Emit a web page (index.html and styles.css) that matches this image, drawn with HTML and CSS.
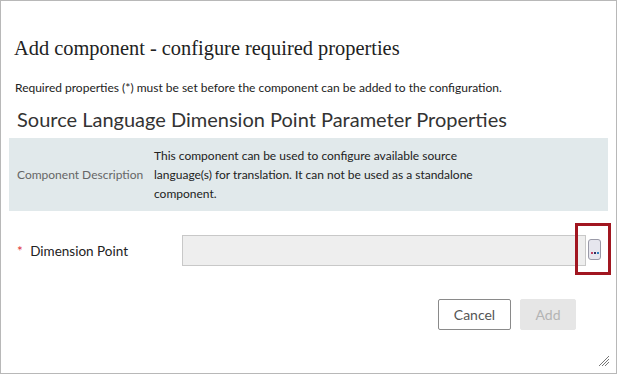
FILE: index.html
```html
<!DOCTYPE html>
<html lang="en">
  <head>
    <meta charset="UTF-8" />
    <meta name="viewport" content="width=device-width, initial-scale=1.0" />
    <title>Add component</title>
    <link rel="stylesheet" href="styles.css">
  </head>
  <body>
    <div class="dialog">
      <h1 class="dialog-title">Add component - configure required properties</h1>
      <p class="intro">Required properties (*) must be set before the component can be added to the configuration.</p>
      <h2 class="section-title">Source Language Dimension Point Parameter Properties</h2>

      <div class="description">
        <div class="description-label">Component Description</div>
        <div class="description-text">This component can be used to configure available source language(s) for translation. It can not be used as a standalone component.</div>
      </div>

      <div class="field-row">
        <label class="field-label" for="dimensionPoint"><span class="required">*</span> Dimension Point</label>
        <div class="field-control">
          <input type="text" id="dimensionPoint" class="field-input" disabled />
          <div class="picker-highlight">
            <button class="picker-button" type="button"><span class="dot d1"></span><span class="dot d2"></span><span class="dot d3"></span></button>
          </div>
        </div>
      </div>

      <div class="actions">
        <button class="btn btn-cancel" type="button">Cancel</button>
        <button class="btn btn-add" type="button" disabled>Add</button>
      </div>

      <svg class="grip" width="12" height="12" viewBox="0 0 12 12">
        <line x1="11" y1="1" x2="1" y2="11" stroke="#777" stroke-width="1" />
        <line x1="11" y1="4" x2="4" y2="11" stroke="#777" stroke-width="1" />
        <line x1="11" y1="7" x2="7" y2="11" stroke="#777" stroke-width="1" />
      </svg>
    </div>
  </body>
</html>
```

FILE: styles.css
```css
body {
  margin: 0;
  background: #ffffff;
  font-family: "Lato", "Open Sans", sans-serif;
  color: #222222;
}
.dialog {
  position: relative;
  box-sizing: border-box;
  width: 617px;
  height: 374px;
  border: 1px solid #b8b8b8;
  padding: 0 8px 0 8px;
}
.dialog-title {
  margin: 34px 0 0 5px;
  font-family: "Liberation Serif", "DejaVu Serif", serif;
  font-weight: normal;
  font-size: 20.4px;
  line-height: 26px;
  color: #222222;
}
.intro {
  margin: 18px 0 0 6px;
  font-size: 12px;
  line-height: 18px;
}
.section-title {
  margin: 10px 0 0 8px;
  font-weight: normal;
  font-size: 20px;
  line-height: 24px;
  color: #333333;
}
.description {
  display: flex;
  align-items: center;
  margin-top: 7px;
  height: 73px;
  background: #e1e9eb;
  font-size: 12px;
}
.description-label {
  box-sizing: border-box;
  width: 145px;
  padding-left: 8px;
  color: #666666;
}
.description-text {
  width: 325px;
  line-height: 19px;
  color: #222222;
}
.field-row {
  display: flex;
  align-items: center;
  margin-top: 24px;
  height: 31px;
}
.field-label {
  width: 165px;
  padding-left: 8px;
  font-size: 13.5px;
  color: #222222;
}
.required {
  color: #e0303a;
  margin-right: 4px;
}
.field-control {
  display: flex;
  align-items: center;
}
.field-input {
  box-sizing: border-box;
  width: 404px;
  height: 31px;
  margin: 0;
  border: 1px solid #c8c8c8;
  background: #eeeeee;
}
.picker-highlight {
  position: relative;
  width: 15px;
  height: 31px;
}
.picker-highlight::before {
  content: "";
  position: absolute;
  left: -11px;
  top: -12px;
  box-sizing: border-box;
  width: 36px;
  height: 52px;
  border: 3px solid #a11620;
}
.picker-button {
  position: absolute;
  left: 2px;
  top: 4px;
  box-sizing: border-box;
  width: 13px;
  height: 21px;
  padding: 0;
  border: 1px solid #9a9aa8;
  border-radius: 3px;
  background: #e6e6ee;
}
.dot {
  position: absolute;
  bottom: 5px;
  width: 2px;
  height: 2px;
}
.d1 {
  left: 2px;
  background: #c04060;
}
.d2 {
  left: 5px;
  background: #303060;
}
.d3 {
  left: 8px;
  background: #3080c0;
}
.actions {
  display: flex;
  justify-content: flex-end;
  gap: 9px;
  margin-top: 33px;
  padding-right: 32px;
}
.btn {
  box-sizing: border-box;
  height: 31px;
  font-family: "Lato", "Open Sans", sans-serif;
  font-size: 14px;
  border-radius: 2px;
}
.btn-cancel {
  width: 73px;
  background: #ffffff;
  border: 1px solid #8a8a8a;
  color: #555555;
}
.btn-add {
  width: 56px;
  background: #e6e6e6;
  border: 1px solid #e6e6e6;
  color: #b4b4b4;
}
.grip {
  position: absolute;
  right: 6px;
  bottom: 6px;
}
```
